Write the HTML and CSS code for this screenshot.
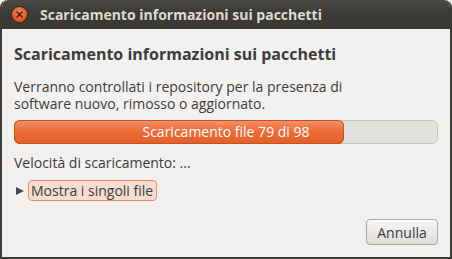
FILE: index.html
```html
<!DOCTYPE html>
<html lang="it">
<head>
  <meta charset="UTF-8">
  <title>Scaricamento informazioni sui pacchetti</title>
  <link rel="stylesheet" href="styles.css">
</head>
<body>
  <div class="window">
    <div class="titlebar">
      <span class="close-btn">
        <svg width="15" height="15" viewBox="0 0 15 15">
          <path d="M5 5 L10 10 M10 5 L5 10" stroke="#3a1a0e" stroke-width="1.4" stroke-linecap="round"/>
        </svg>
      </span>
      <span class="title">Scaricamento informazioni sui pacchetti</span>
    </div>
    <div class="content">
      <h1>Scaricamento informazioni sui pacchetti</h1>
      <p class="desc">Verranno controllati i repository per la presenza di software nuovo, rimosso o aggiornato.</p>
      <div class="progress">
        <div class="progress-fill" style="width: 78.3%"></div>
        <span class="progress-label">Scaricamento file 79 di 98</span>
      </div>
      <p class="speed">Velocità di scaricamento: ...</p>
      <div class="expander">
        <span class="arrow"></span>
        <span class="expander-label">Mostra i singoli file</span>
      </div>
      <div class="buttons">
        <button class="btn">Annulla</button>
      </div>
    </div>
  </div>
</body>
</html>
```

FILE: styles.css
```css
body {
  margin: 0;
  background: #f2f1f0;
  font-family: "Open Sans", sans-serif;
  color: #3c3c3c;
}

.window {
  width: 452px;
  height: 259px;
  box-sizing: border-box;
  display: flex;
  flex-direction: column;
  background: #f2f1f0;
  border: 2px solid #3c3b37;
  border-top: none;
  border-radius: 8px 8px 0 0;
  overflow: hidden;
}

.titlebar {
  height: 29px;
  flex: none;
  display: flex;
  align-items: center;
  background: linear-gradient(#4a4944, #3c3b37 40%, #393834);
  margin: 0 -2px;
  padding-left: 12px;
  border-radius: 8px 8px 0 0;
}

.close-btn {
  width: 15px;
  height: 15px;
  border-radius: 50%;
  background: radial-gradient(circle at 50% 35%, #f4835a, #e9561f 70%, #c9431a);
  box-shadow: 0 0 0 1px #2e2d2a;
  display: flex;
}

.title {
  margin-left: 13px;
  color: #dfdbd2;
  font-weight: bold;
  font-size: 14px;
}

.content {
  flex: 1;
  padding: 14px 12px 12px 12px;
  display: flex;
  flex-direction: column;
}

h1 {
  margin: 0;
  font-size: 16px;
  font-weight: bold;
  line-height: 22px;
}

.desc {
  margin: 13px 0 0;
  max-width: 370px;
  font-size: 14px;
  line-height: 17px;
}

.progress {
  position: relative;
  margin-top: 8px;
  height: 24px;
  width: 424px;
  box-sizing: border-box;
  border: 1px solid #c8c6c2;
  border-radius: 6px;
  background: #e3e1de;
}

.progress-fill {
  height: 24px;
  margin: -1px;
  border-radius: 6px;
  background: linear-gradient(#f5946a, #ec6b35 50%, #e35f2a);
  box-shadow: inset 0 0 0 1px #c8501f;
}

.progress-label {
  position: absolute;
  inset: 0;
  text-align: center;
  line-height: 22px;
  font-size: 14px;
  color: #fff;
}

.speed {
  margin: 10px 0 0;
  font-size: 14px;
  line-height: 17px;
}

.expander {
  margin-top: 9px;
  display: flex;
  align-items: center;
}

.arrow {
  width: 0;
  height: 0;
  border-top: 4.5px solid transparent;
  border-bottom: 4.5px solid transparent;
  border-left: 8px solid #4a4a48;
  margin: 0 4px 0 2px;
}

.expander-label {
  font-size: 14px;
  border: 1px solid #f08c60;
  background: #f5ddd3;
  border-radius: 4px;
  padding: 1px 3px 1px 2px;
  line-height: 17px;
}

.buttons {
  margin-top: auto;
  display: flex;
  justify-content: flex-end;
}

.btn {
  font-family: inherit;
  font-size: 14px;
  color: #3c3c3c;
  width: 72px;
  height: 26px;
  border: 1px solid #a9a7a3;
  border-radius: 4px;
  background: linear-gradient(#f8f7f6, #dedcd9);
  box-shadow: inset 0 1px 0 #fff;
}
```
